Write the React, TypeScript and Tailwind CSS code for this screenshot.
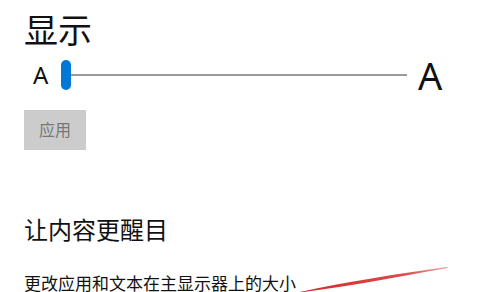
import React from 'react';

export default function App() {
  return (
    <main
      className="relative w-[500px] h-[292px] overflow-hidden bg-white text-[#111] pl-6"
      style={{ fontFamily: '"Noto Sans", "Noto Sans CJK SC", sans-serif' }}
    >
      {/* 显示 */}
      <h1 className="pt-[10px] text-[34px] leading-[40px] font-normal">显示</h1>

      {/* 文字大小滑块 */}
      <div className="flex items-center h-[32px] mt-[9px]">
        <span className="w-[37px] pl-[9px] text-[24px] leading-none">A</span>
        <div className="relative flex-1 max-w-[346px] h-[30px] flex items-center">
          <div className="w-[10px] h-[30px] rounded-full bg-[#0078d7] shrink-0" />
          <div className="flex-1 h-[2px] bg-[#9a9a9a]" />
        </div>
        <span className="ml-[11px] text-[38px] leading-none">A</span>
      </div>

      <button
        type="button"
        className="mt-[19px] w-[62px] h-[40px] bg-[#cccccc] text-[#777] text-[16px]"
      >
        应用
      </button>

      {/* 让内容更醒目 */}
      <h2 className="mt-[64px] text-[24px] leading-[32px] font-normal">让内容更醒目</h2>
      <p className="mt-[26px] text-[17px] leading-[24px]">更改应用和文本在主显示器上的大小</p>

      {/* 红色标注线 */}
      <svg
        className="absolute left-[296px] top-[262px]"
        width="156"
        height="30"
        viewBox="0 0 156 30"
      >
        <defs>
          <linearGradient id="red" x1="0" y1="0" x2="1" y2="0">
            <stop offset="0" stopColor="#d42a2a" />
            <stop offset="0.7" stopColor="#dd4a4a" />
            <stop offset="1" stopColor="#e9a0a0" />
          </linearGradient>
        </defs>
        <path d="M4 30 C50 20 100 12 151 5 L152 6 C100 15 55 24 8 30 Z" fill="url(#red)" />
      </svg>
    </main>
  );
}
